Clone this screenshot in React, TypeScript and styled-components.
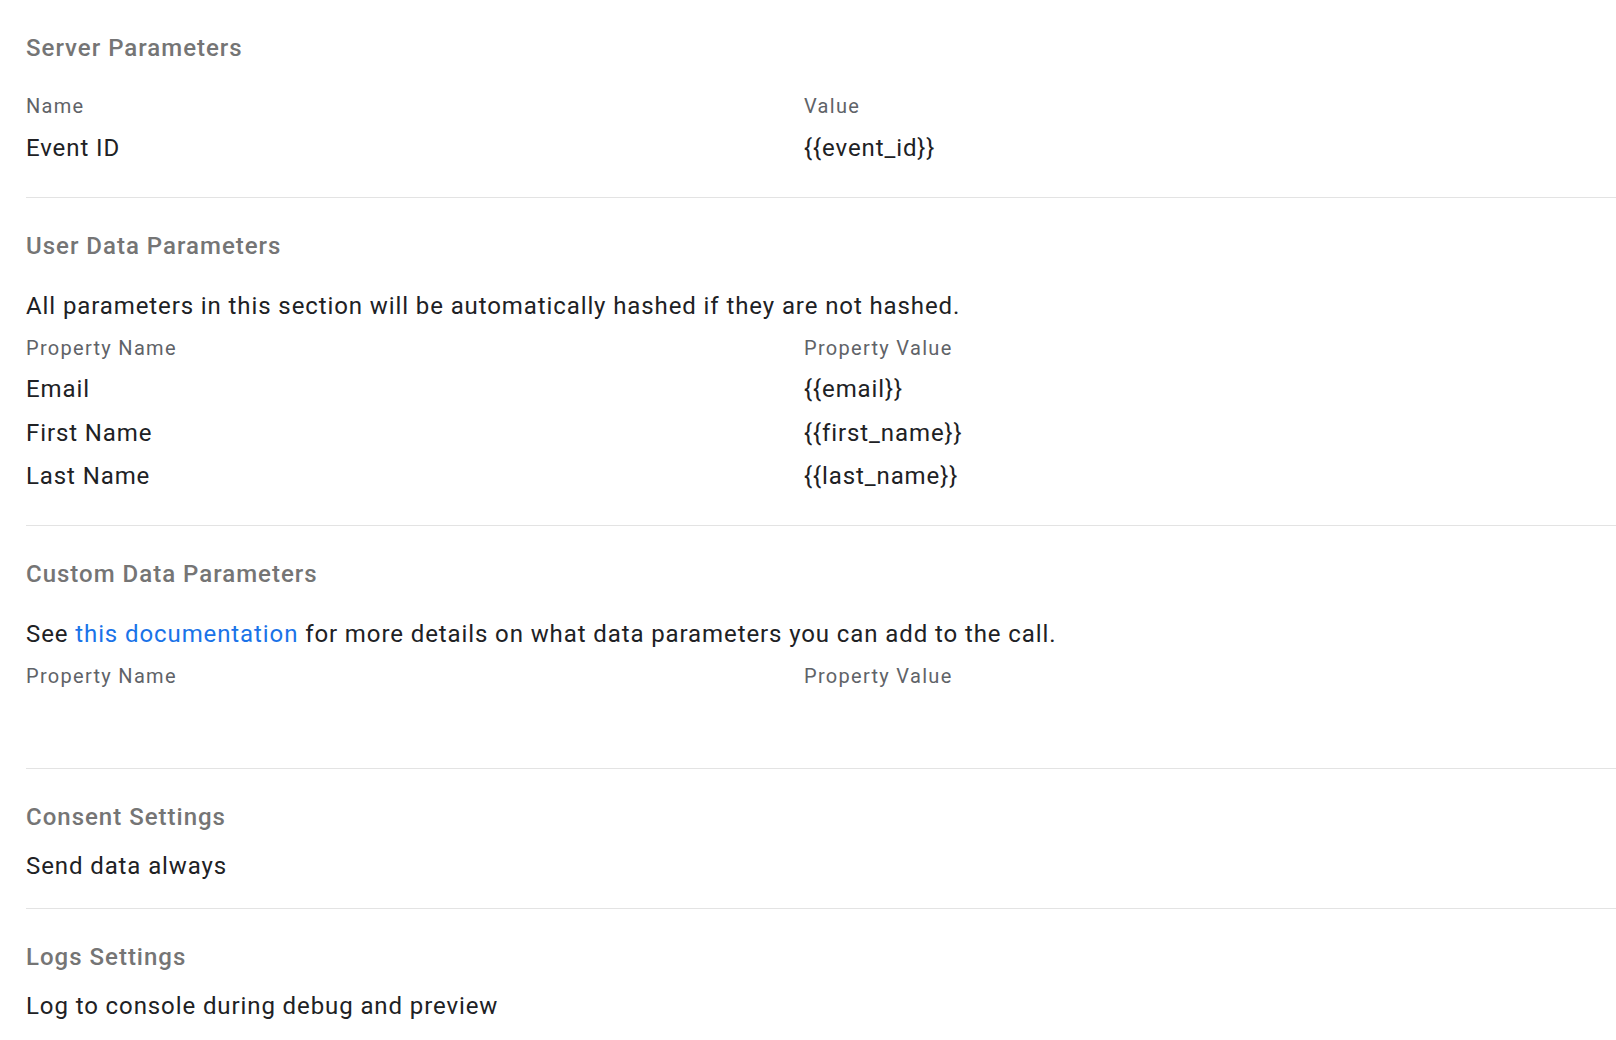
import React from 'react';
import styled, { createGlobalStyle } from 'styled-components';

interface Param {
  name: string;
  value: string;
}

const serverParams: Param[] = [{ name: 'Event ID', value: '{{event_id}}' }];

const userParams: Param[] = [
  { name: 'Email', value: '{{email}}' },
  { name: 'First Name', value: '{{first_name}}' },
  { name: 'Last Name', value: '{{last_name}}' },
];

function ParamTable({
  nameLabel,
  valueLabel,
  rows,
}: {
  nameLabel: string;
  valueLabel: string;
  rows: Param[];
}) {
  return (
    <Table>
      <HeadCell>{nameLabel}</HeadCell>
      <HeadCell>{valueLabel}</HeadCell>
      {rows.length === 0 && <EmptyRow />}
      {rows.map((row) => (
        <React.Fragment key={row.name}>
          <Cell>{row.name}</Cell>
          <Cell>{row.value}</Cell>
        </React.Fragment>
      ))}
    </Table>
  );
}

export default function App() {
  return (
    <>
      <GlobalStyle />
      <Page>
        <Section>
          <SectionTitle>Server Parameters</SectionTitle>
          <SectionBody padded>
            <ParamTable nameLabel="Name" valueLabel="Value" rows={serverParams} />
          </SectionBody>
        </Section>

        <Section>
          <SectionTitle>User Data Parameters</SectionTitle>
          <SectionBody padded>
            <Text>
              All parameters in this section will be automatically hashed if they are not
              hashed.
            </Text>
            <ParamTable
              nameLabel="Property Name"
              valueLabel="Property Value"
              rows={userParams}
            />
          </SectionBody>
        </Section>

        <Section>
          <SectionTitle>Custom Data Parameters</SectionTitle>
          <SectionBody padded>
            <Text>
              See <Link href="#">this documentation</Link> for more details on what data
              parameters you can add to the call.
            </Text>
            <ParamTable nameLabel="Property Name" valueLabel="Property Value" rows={[]} />
          </SectionBody>
        </Section>

        <Section compact>
          <SectionTitle>Consent Settings</SectionTitle>
          <SectionBody>
            <Text>Send data always</Text>
          </SectionBody>
        </Section>

        <Section compact>
          <SectionTitle>Logs Settings</SectionTitle>
          <SectionBody>
            <Text>Log to console during debug and preview</Text>
          </SectionBody>
        </Section>
      </Page>
    </>
  );
}

const GlobalStyle = createGlobalStyle`
  html, body {
    margin: 0;
    padding: 0;
    background: #ffffff;
  }
  body {
    font-family: Roboto, 'Noto Sans', Arial, sans-serif;
    color: #202124;
    -webkit-font-smoothing: antialiased;
  }
`;

const Page = styled.div`
  padding-left: 26px;
  display: flex;
  flex-direction: column;
`;

const Section = styled.section<{ compact?: boolean }>`
  padding: 32px 0 ${({ compact }) => (compact ? '26px' : '33px')};
  border-bottom: 1px solid #e3e3e3;

  &:last-child {
    border-bottom: none;
  }
`;

const SectionTitle = styled.h2`
  margin: 0 0 17px;
  font-size: 24px;
  line-height: 32px;
  font-weight: 500;
  letter-spacing: 1px;
  color: #757575;
`;

const SectionBody = styled.div<{ padded?: boolean }>`
  display: flex;
  flex-direction: column;
  gap: 12px;
  padding-top: ${({ padded }) => (padded ? '11px' : '0')};
`;

const Text = styled.div`
  font-size: 24px;
  line-height: 32px;
  letter-spacing: 0.9px;
  color: #202124;
`;

const Link = styled.a`
  color: #1a73e8;
  text-decoration: none;
`;

const Table = styled.div`
  display: grid;
  grid-template-columns: 778px 1fr;
  row-gap: 11.5px;
`;

const HeadCell = styled.div`
  font-size: 20px;
  line-height: 28px;
  letter-spacing: 1.3px;
  color: #5f6368;
`;

const Cell = styled.div`
  font-size: 24px;
  line-height: 32px;
  letter-spacing: 0.9px;
  color: #202124;
`;

const EmptyRow = styled.div`
  grid-column: 1 / -1;
  height: 33px;
`;
